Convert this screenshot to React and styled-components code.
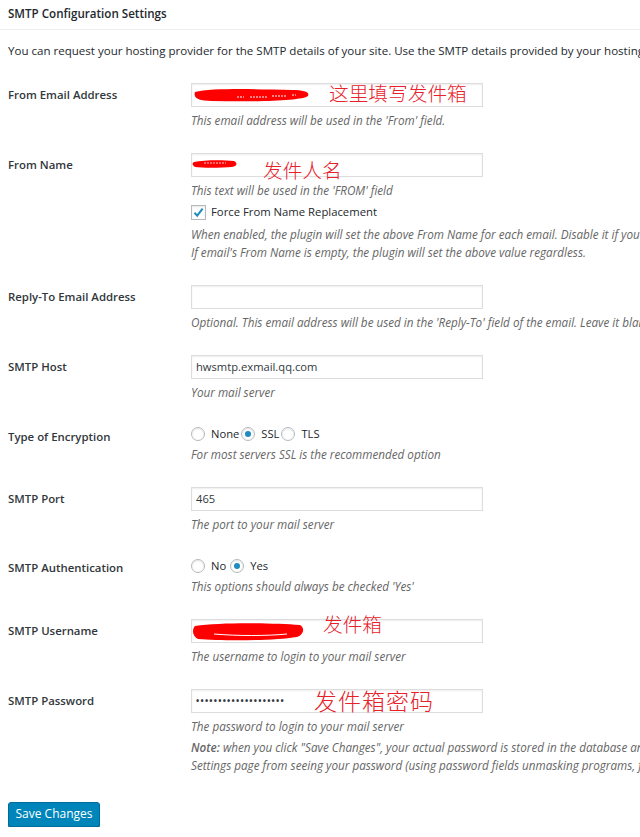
import React from "react";
import styled, { createGlobalStyle } from "styled-components";

const GlobalStyle = createGlobalStyle`
  html, body { margin: 0; padding: 0; background: #fff; overflow: hidden; }
  body { font-family: "Open Sans", "Noto Sans", sans-serif; color: #23282d; }
  * { box-sizing: border-box; }
`;

const Page = styled.div`
  width: 640px;
  overflow: hidden;
`;

const Header = styled.h2`
  margin: 0;
  padding: 5px 8px 0 8px;
  height: 30px;
  font-size: 11.6px;
  font-weight: 600;
  line-height: 18px;
  border-bottom: 1px solid #eeeeee;
`;

const Intro = styled.p`
  margin: 12px 0 0 8px;
  font-size: 11.55px;
  line-height: 18px;
  white-space: nowrap;
`;

const Form = styled.div`
  display: flex;
  flex-direction: column;
  gap: 24px;
  padding: 0 0 0 8px;
  margin-top: 23px;
`;

const Row = styled.div`
  display: grid;
  grid-template-columns: 183px 1fr;
  align-items: start;
`;

const Label = styled.div`
  font-size: 11.4px;
  font-weight: 600;
  line-height: 18px;
  color: #32373c;
  padding-top: ${(p) => p.$top ?? 3}px;
  white-space: nowrap;
`;

const Field = styled.div`
  display: flex;
  flex-direction: column;
  min-width: 0;
`;

const InputBox = styled.div`
  position: relative;
  width: 292px;
  height: 24px;
  border: 1px solid #dddddd;
  box-shadow: inset 0 1px 2px rgba(0, 0, 0, 0.07);
  background: #fff;
  font-size: 11.2px;
  line-height: 22px;
  padding: 0 4px;
  color: #32373c;
`;

const Dots = styled.span`
  font-size: 8.5px;
  font-weight: 700;
  letter-spacing: 1.25px;
  position: relative;
  top: -1px;
`;

const Desc = styled.p`
  margin: ${(p) => p.$mt ?? 4}px 0 0 0;
  font-size: 11.7px;
  font-style: italic;
  line-height: 18px;
  color: #666;
  white-space: nowrap;
`;

const Strong = styled.strong`
  font-weight: 600;
`;

const CheckRow = styled.label`
  display: flex;
  align-items: center;
  gap: 5px;
  height: 18px;
  margin-top: 4px;
  font-size: 11.3px;
  line-height: 18px;
`;

const CheckBox = styled.span`
  width: 15px;
  height: 15px;
  border: 1px solid #b4b9be;
  box-shadow: inset 0 1px 2px rgba(0, 0, 0, 0.1);
  display: inline-flex;
  align-items: center;
  justify-content: center;
`;

const RadioRow = styled.div`
  display: flex;
  align-items: center;
  height: 18px;
  font-size: 11.2px;
  line-height: 18px;
`;

const Radio = styled.span`
  width: 14px;
  height: 14px;
  border-radius: 50%;
  border: 1px solid #b4b9be;
  box-shadow: inset 0 1px 2px rgba(0, 0, 0, 0.1);
  display: inline-flex;
  align-items: center;
  justify-content: center;
  margin-right: 6px;
  flex: none;
  &::after {
    content: "";
    width: 6px;
    height: 6px;
    border-radius: 50%;
    background: ${(p) => (p.$on ? "#1e8cbe" : "transparent")};
  }
`;

const RadioText = styled.span`
  margin-right: ${(p) => p.$mr ?? 2}px;
`;

const Annot = styled.span`
  position: absolute;
  left: ${(p) => p.$x}px;
  top: ${(p) => p.$y}px;
  font-family: "Noto Sans CJK SC", sans-serif;
  font-weight: 300;
  font-size: ${(p) => p.$size ?? 19.7}px;
  letter-spacing: ${(p) => p.$ls ?? 0}px;
  line-height: 20px;
  color: #e8202a;
  white-space: nowrap;
`;

const Scribble = styled.svg`
  position: absolute;
  left: 0;
  top: 0;
  overflow: visible;
`;

const ButtonRow = styled.div`
  padding: 27px 0 0 8px;
`;

const SaveButton = styled.button`
  width: 92px;
  height: 25px;
  background: #0085ba;
  border: 1px solid #006b9a;
  border-radius: 3px;
  box-shadow: 0 1px 0 #006799;
  color: #fff;
  font-family: "Open Sans", sans-serif;
  font-size: 12px;
  line-height: 22px;
  padding: 0;
`;

function Check() {
  return (
    <svg width="13" height="13" viewBox="0 0 13 13">
      <path d="M2.5 6.8 L5.2 9.6 L10.6 2.6" fill="none" stroke="#1e8cbe" strokeWidth="2" />
    </svg>
  );
}

export default function App() {
  return (
    <Page>
      <GlobalStyle />
      <Header>SMTP Configuration Settings</Header>
      <Intro>
        You can request your hosting provider for the SMTP details of your site. Use the SMTP details provided by your hosting provider to configure the following settings.
      </Intro>
      <Form>
        <Row>
          <Label>From Email Address</Label>
          <Field>
            <InputBox>
              <Scribble width="292" height="24">
                <path d="M3 8 C20 4, 60 5, 100 6 C112 6, 118 8, 116 12 C110 17, 60 18, 20 17 C6 17, 1 14, 3 8 Z" fill="#ff0000" />
                <path d="M45 13 L52 13 M58 13 L75 13 M80 12 L95 12 M100 11 L104 11" stroke="#fff" strokeWidth="1" strokeDasharray="2 1" />
              </Scribble>
              <Annot $x={137} $y={-1}>这里填写发件箱</Annot>
            </InputBox>
            <Desc>This email address will be used in the 'From' field.</Desc>
          </Field>
        </Row>
        <Row>
          <Label>From Name</Label>
          <Field>
            <InputBox>
              <Scribble width="292" height="24">
                <path d="M2 8 C12 6, 30 6, 42 7 C46 9, 45 12, 40 13 C28 14, 10 14, 3 13 C0 11, 0 9, 2 8 Z" fill="#ff0000" />
                <path d="M12 9 L34 9" stroke="#fff" strokeWidth="0.8" strokeDasharray="2 1" />
              </Scribble>
              <Annot $x={71} $y={6}>发件人名</Annot>
            </InputBox>
            <Desc>This text will be used in the 'FROM' field</Desc>
            <CheckRow>
              <CheckBox>
                <Check />
              </CheckBox>
              Force From Name Replacement
            </CheckRow>
            <Desc>
              When enabled, the plugin will set the above From Name for each email. Disable it if you're using contact form plugins, it will prevent the plugin from replacing form submitter's name when contact email is sent.
              <br />
              If email's From Name is empty, the plugin will set the above value regardless.
            </Desc>
          </Field>
        </Row>
        <Row>
          <Label>Reply-To Email Address</Label>
          <Field>
            <InputBox />
            <Desc>Optional. This email address will be used in the 'Reply-To' field of the email. Leave it blank to use 'From' email as the reply-to value.</Desc>
          </Field>
        </Row>
        <Row>
          <Label>SMTP Host</Label>
          <Field>
            <InputBox>hwsmtp.exmail.qq.com</InputBox>
            <Desc>Your mail server</Desc>
          </Field>
        </Row>
        <Row>
          <Label $top={3}>Type of Encryption</Label>
          <Field>
            <RadioRow>
              <Radio />
              <RadioText>None</RadioText>
              <Radio $on />
              <RadioText>SSL</RadioText>
              <Radio />
              <RadioText>TLS</RadioText>
            </RadioRow>
            <Desc $mt={2}>For most servers SSL is the recommended option</Desc>
          </Field>
        </Row>
        <Row>
          <Label>SMTP Port</Label>
          <Field>
            <InputBox>465</InputBox>
            <Desc>The port to your mail server</Desc>
          </Field>
        </Row>
        <Row>
          <Label $top={2}>SMTP Authentication</Label>
          <Field>
            <RadioRow>
              <Radio />
              <RadioText $mr={4}>No</RadioText>
              <Radio $on />
              <RadioText>Yes</RadioText>
            </RadioRow>
            <Desc $mt={2}>This options should always be checked 'Yes'</Desc>
          </Field>
        </Row>
        <Row>
          <Label>SMTP Username</Label>
          <Field>
            <InputBox>
              <Scribble width="292" height="24">
                <path d="M3 6 C30 2, 80 3, 108 5 C113 8, 112 14, 105 17 C80 21, 30 21, 6 19 C0 16, 0 9, 3 6 Z" fill="#ff0000" />
                <path d="M22 14 C45 16, 75 16, 95 14" stroke="#fff" strokeWidth="1" fill="none" />
              </Scribble>
              <Annot $x={131} $y={-6}>发件箱</Annot>
            </InputBox>
            <Desc>The username to login to your mail server</Desc>
          </Field>
        </Row>
        <Row>
          <Label>SMTP Password</Label>
          <Field>
            <InputBox>
              <Dots>••••••••••••••••••••</Dots>
              <Annot $x={122} $y={0} $size={23} $ls={1}>发件箱密码</Annot>
            </InputBox>
            <Desc>The password to login to your mail server</Desc>
            <Desc $mt={3}>
              <Strong>Note:</Strong> when you click "Save Changes", your actual password is stored in the database and then used to send emails. This field is replaced with a gag (#easywpsmtpgagpass#). This is done to prevent someone with the access to
              <br />
              Settings page from seeing your password (using password fields unmasking programs, for example).
            </Desc>
          </Field>
        </Row>
      </Form>
      <ButtonRow>
        <SaveButton>Save Changes</SaveButton>
      </ButtonRow>
    </Page>
  );
}
